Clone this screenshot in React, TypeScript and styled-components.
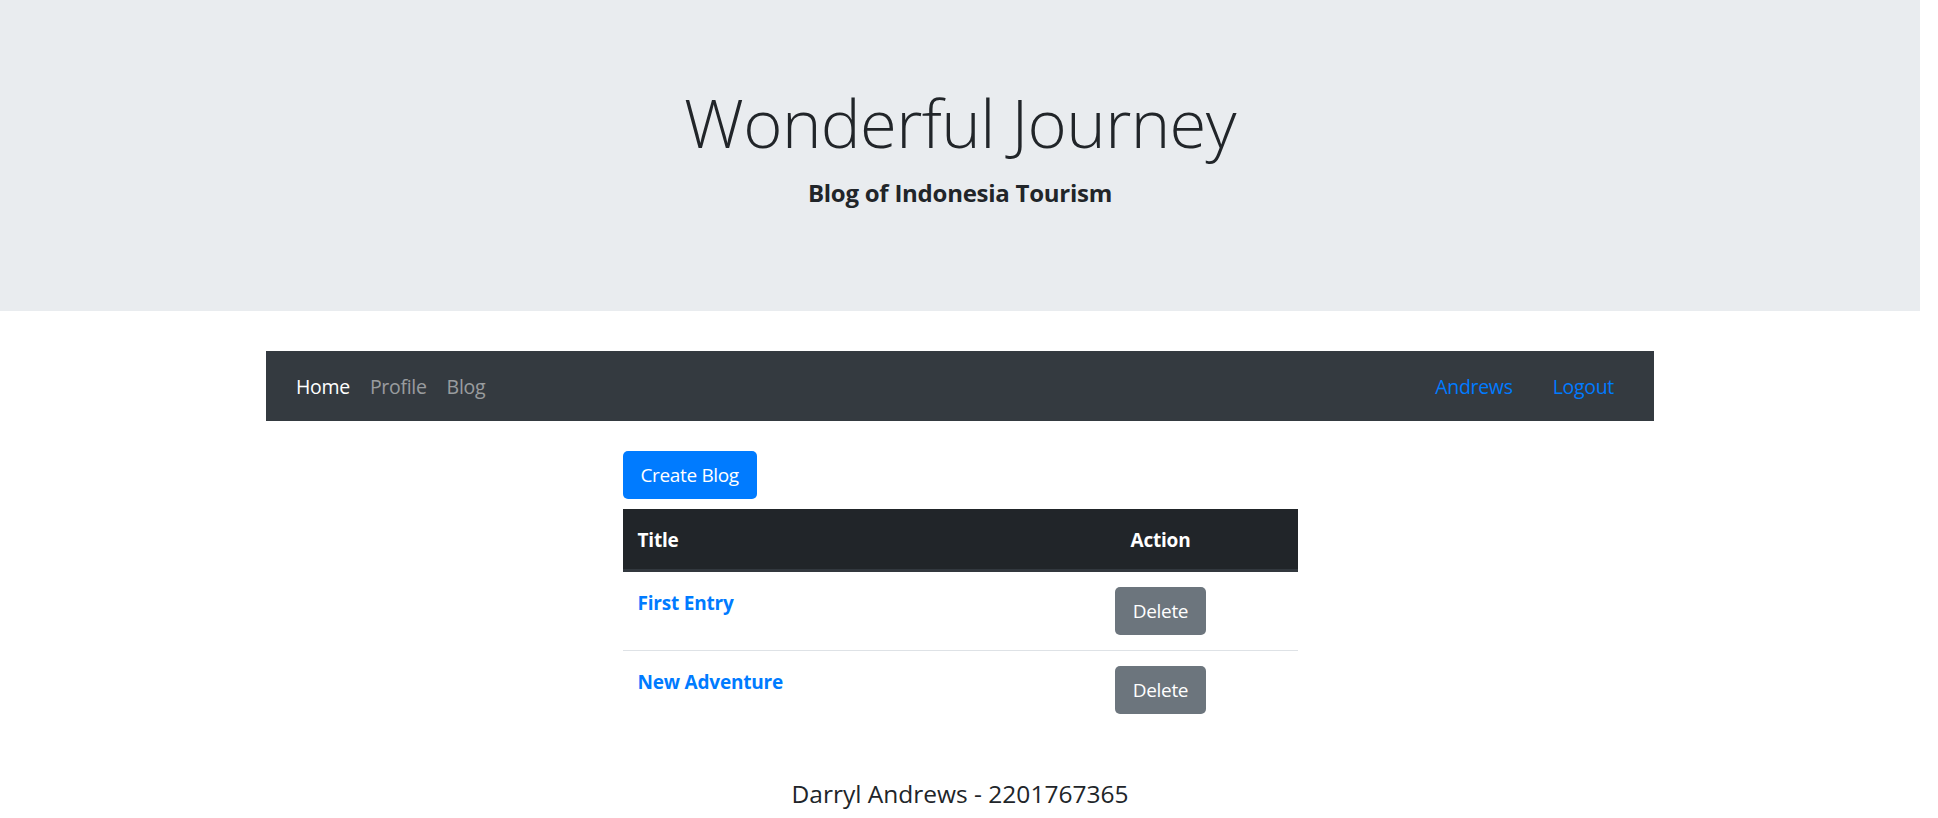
import React from "react";
import styled, { createGlobalStyle } from "styled-components";

const GlobalStyle = createGlobalStyle`
  html, body {
    margin: 0;
    padding: 0;
    background: #ffffff;
  }
  body {
    font-family: "Open Sans", "Noto Sans", "Liberation Sans", sans-serif;
    color: #212529;
  }
  * { box-sizing: border-box; }
`;

const Page = styled.div`
  width: 1920px;
  min-height: 818px;
`;

const Jumbotron = styled.header`
  background: #e9ecef;
  height: 311px;
  padding-top: 80px;
  margin-bottom: 40px;
  text-align: center;
`;

const Title = styled.h1`
  margin: 0;
  font-size: 67px;
  font-weight: 300;
  line-height: 84px;
  letter-spacing: -0.6px;
  color: #212529;
`;

const Subtitle = styled.h5`
  margin: 14px 0 0;
  font-size: 24px;
  font-weight: 700;
  line-height: 30px;
  letter-spacing: -0.25px;
  color: #212529;
`;

const Container = styled.div`
  width: 1388px;
  margin: 0 auto;
`;

const Navbar = styled.nav`
  height: 70px;
  background: #343a40;
  padding: 0 20px;
  display: flex;
  align-items: center;
  justify-content: space-between;
`;

const NavGroup = styled.div`
  display: flex;
  align-items: center;
`;

const NavLink = styled.a<{ $active?: boolean; $accent?: boolean; $wide?: boolean }>`
  display: block;
  padding: 2px ${(p) => (p.$wide ? "20px" : "10px")} 0;
  font-size: 19.5px;
  line-height: 30px;
  text-decoration: none;
  letter-spacing: -0.3px;
  color: ${(p) =>
    p.$accent ? "#007bff" : p.$active ? "#ffffff" : "rgba(255,255,255,0.5)"};
  cursor: pointer;
`;

const Content = styled.main`
  width: 675px;
  margin: 30px auto 0;
`;

const Button = styled.button<{ $variant: "primary" | "secondary" }>`
  display: inline-block;
  border: none;
  border-radius: 5px;
  padding: 9px 18px;
  height: 48px;
  font-family: inherit;
  font-size: 19px;
  line-height: 30px;
  letter-spacing: -0.35px;
  color: #ffffff;
  background: ${(p) => (p.$variant === "primary" ? "#007bff" : "#6c757d")};
  cursor: pointer;
`;

const Table = styled.table`
  width: 100%;
  margin-top: 10px;
  border-collapse: collapse;
`;

const HeadCell = styled.th<{ $center?: boolean }>`
  background: #212529;
  color: #ffffff;
  padding: 16px 15px 14px;
  font-size: 19px;
  font-weight: 700;
  line-height: 30px;
  letter-spacing: -0.2px;
  text-align: ${(p) => (p.$center ? "center" : "left")};
  border-bottom: 3px solid #32383e;
  width: ${(p) => (p.$center ? "274px" : "auto")};
`;

const Cell = styled.td<{ $center?: boolean }>`
  padding: 15px;
  vertical-align: top;
  text-align: ${(p) => (p.$center ? "center" : "left")};
  border-top: 1px solid #dee2e6;
  font-size: 19px;
  line-height: 30px;
`;

const Row = styled.tr`
  &:first-child td {
    border-top: none;
  }
`;

const EntryLink = styled.a`
  display: inline-block;
  padding-top: 1px;
  color: #007bff;
  font-weight: 700;
  text-decoration: none;
  letter-spacing: -0.2px;
  cursor: pointer;
`;

const Footer = styled.footer`
  margin-top: 50px;
  text-align: center;
  font-size: 24.5px;
  line-height: 30px;
  font-weight: 500;
  letter-spacing: 0;
  color: #212529;
`;

const entries = ["First Entry", "New Adventure"];

export default function App() {
  return (
    <Page>
      <GlobalStyle />
      <Jumbotron>
        <Title>Wonderful Journey</Title>
        <Subtitle>Blog of Indonesia Tourism</Subtitle>
      </Jumbotron>
      <Container>
        <Navbar>
          <NavGroup>
            <NavLink $active>Home</NavLink>
            <NavLink>Profile</NavLink>
            <NavLink>Blog</NavLink>
          </NavGroup>
          <NavGroup>
            <NavLink $accent $wide>Andrews</NavLink>
            <NavLink $accent $wide>Logout</NavLink>
          </NavGroup>
        </Navbar>
        <Content>
          <Button $variant="primary">Create Blog</Button>
          <Table>
            <thead>
              <tr>
                <HeadCell>Title</HeadCell>
                <HeadCell $center>Action</HeadCell>
              </tr>
            </thead>
            <tbody>
              {entries.map((e) => (
                <Row key={e}>
                  <Cell>
                    <EntryLink>{e}</EntryLink>
                  </Cell>
                  <Cell $center>
                    <Button $variant="secondary">Delete</Button>
                  </Cell>
                </Row>
              ))}
            </tbody>
          </Table>
        </Content>
        <Footer>Darryl Andrews - 2201767365</Footer>
      </Container>
    </Page>
  );
}
